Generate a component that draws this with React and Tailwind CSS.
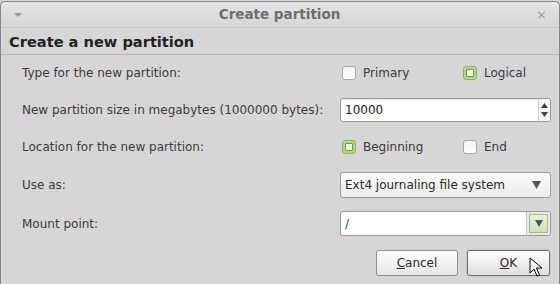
import React from "react";

const font = { fontFamily: '"DejaVu Sans", "Liberation Sans", sans-serif' };

function Check({ checked, label }) {
  return (
    <div className="flex items-center gap-[7px]">
      {checked ? (
        <div className="w-[14px] h-[14px] rounded-[3px] border border-[#8fb35d] bg-[#b5d58c] flex items-center justify-center">
          <div className="w-[8px] h-[8px] border border-[#6f9a3c] bg-[#f2f7ea] rounded-[1px]" />
        </div>
      ) : (
        <div className="w-[14px] h-[14px] rounded-[3px] border border-[#a9a9a9] bg-gradient-to-b from-[#f2f2f2] to-[#ffffff]" />
      )}
      <span className="text-[12px] text-[#3a3a3a]">{label}</span>
    </div>
  );
}

function Row({ label, children, h }) {
  return (
    <div className={`flex items-center ${h}`}>
      <div className="w-[339px] shrink-0 pl-[21px] text-[12px] text-[#3c3c3c] whitespace-nowrap">{label}</div>
      <div className="flex-1">{children}</div>
    </div>
  );
}

export default function App() {
  return (
    <div className="w-[560px] h-[284px] overflow-hidden bg-[#d6d6d6]" style={font}>
      <div className="relative h-[284px] mt-[1px] border-l border-t border-r border-[#858585] rounded-tl-[5px] rounded-tr-[5px] bg-[#d6d6d6]">
        <div className="h-[25px] flex items-center justify-between px-[12px] bg-gradient-to-b from-[#e4e4e4] to-[#d6d6d6] rounded-tl-[5px] rounded-tr-[5px]">
          <svg width="10" height="6" viewBox="0 0 10 6"><path d="M1 1h8L5 5z" fill="#9a9a9a" /></svg>
          <span className="text-[13.5px] font-bold text-[#6e6e6e]">Create partition</span>
          <span className="text-[13px] text-[#9c9c9c] leading-none">×</span>
        </div>
        <div className="border-t border-[#c9c9c9]" />
        <div className="h-[26px] pl-[8px] flex items-center pt-[2px] text-[14.6px] font-bold text-[#222]">Create a new partition</div>
        <div className="border-t border-[#b8b8b8]" />
        <div>
          <Row label="Type for the new partition:" h="h-[36px]">
            <div className="flex pl-[2px]">
              <div className="w-[121px]"><Check label="Primary" /></div>
              <Check checked label="Logical" />
            </div>
          </Row>
          <Row label="New partition size in megabytes (1000000 bytes):" h="h-[37px]">
            <div className="w-[211px] h-[24px] bg-white border border-[#9a9a9a] rounded-[3px] flex items-center shadow-[inset_0_1px_1px_rgba(0,0,0,0.1)]">
              <span className="flex-1 pl-[4px] text-[12px] text-[#222]">10000</span>
              <div className="w-[12px] h-full border-l border-[#d0d0d0] flex flex-col items-center justify-center gap-[4px] bg-[#f4f4f4] rounded-r-[3px]">
                <svg width="7" height="5" viewBox="0 0 7 5"><path d="M3.5 0L7 5H0z" fill="#444" /></svg>
                <svg width="7" height="5" viewBox="0 0 7 5"><path d="M0 0h7L3.5 5z" fill="#444" /></svg>
              </div>
            </div>
          </Row>
          <Row label="Location for the new partition:" h="h-[37px]">
            <div className="flex pl-[2px]">
              <div className="w-[121px]"><Check checked label="Beginning" /></div>
              <Check label="End" />
            </div>
          </Row>
          <Row label="Use as:" h="h-[39px]">
            <div className="w-[211px] h-[26px] border border-[#9f9f9f] rounded-[3px] bg-gradient-to-b from-[#fbfbfb] to-[#ececec] flex items-center justify-between pl-[4px] pr-[9px]">
              <span className="text-[12px] text-[#2a2a2a]">Ext4 journaling file system</span>
              <svg width="9" height="8" viewBox="0 0 9 8"><path d="M0 0h9L4.5 8z" fill="#555" /></svg>
            </div>
          </Row>
          <Row label="Mount point:" h="h-[39px]">
            <div className="w-[211px] h-[25px] bg-white border border-[#9a9a9a] rounded-[3px] flex items-center">
              <span className="flex-1 pl-[4px] text-[12px] text-[#1c3fa0]">/</span>
              <div className="w-[24px] h-full border-l border-[#c9c9c9] bg-[#e9e9e9] p-[2px] rounded-r-[3px]">
                <div className="w-full h-full border border-[#9fbf7a] bg-gradient-to-b from-[#e8f1dc] to-[#cfe0b8] flex items-center justify-center">
                  <svg width="8" height="7" viewBox="0 0 8 7"><path d="M0 0h8L4 7z" fill="#555" /></svg>
                </div>
              </div>
            </div>
          </Row>
          <div className="flex justify-end gap-[9px] pr-[9px] pt-[7px]">
            <button className="w-[82px] h-[26px] border border-[#8e8e8e] rounded-[3px] bg-gradient-to-b from-[#ffffff] to-[#e6e6e6] text-[12px] text-[#2a2a2a]">
              <span className="underline">C</span>ancel
            </button>
            <button className="relative w-[83px] h-[26px] border border-[#6e6e6e] rounded-[3px] bg-gradient-to-b from-[#ffffff] to-[#dedede] text-[12px] text-[#2a2a2a] shadow-[0_0_0_1px_rgba(0,0,0,0.08)]">
              <span className="underline">O</span>K
              <svg className="absolute left-[61px] top-[6px]" width="14" height="21" viewBox="0 0 14 21">
                <path d="M1 1v15l4-4 3 7 2.5-1-3-7h5.5z" fill="#fff" stroke="#000" strokeWidth="1" strokeLinejoin="round" />
              </svg>
            </button>
          </div>
        </div>
      </div>
    </div>
  );
}
